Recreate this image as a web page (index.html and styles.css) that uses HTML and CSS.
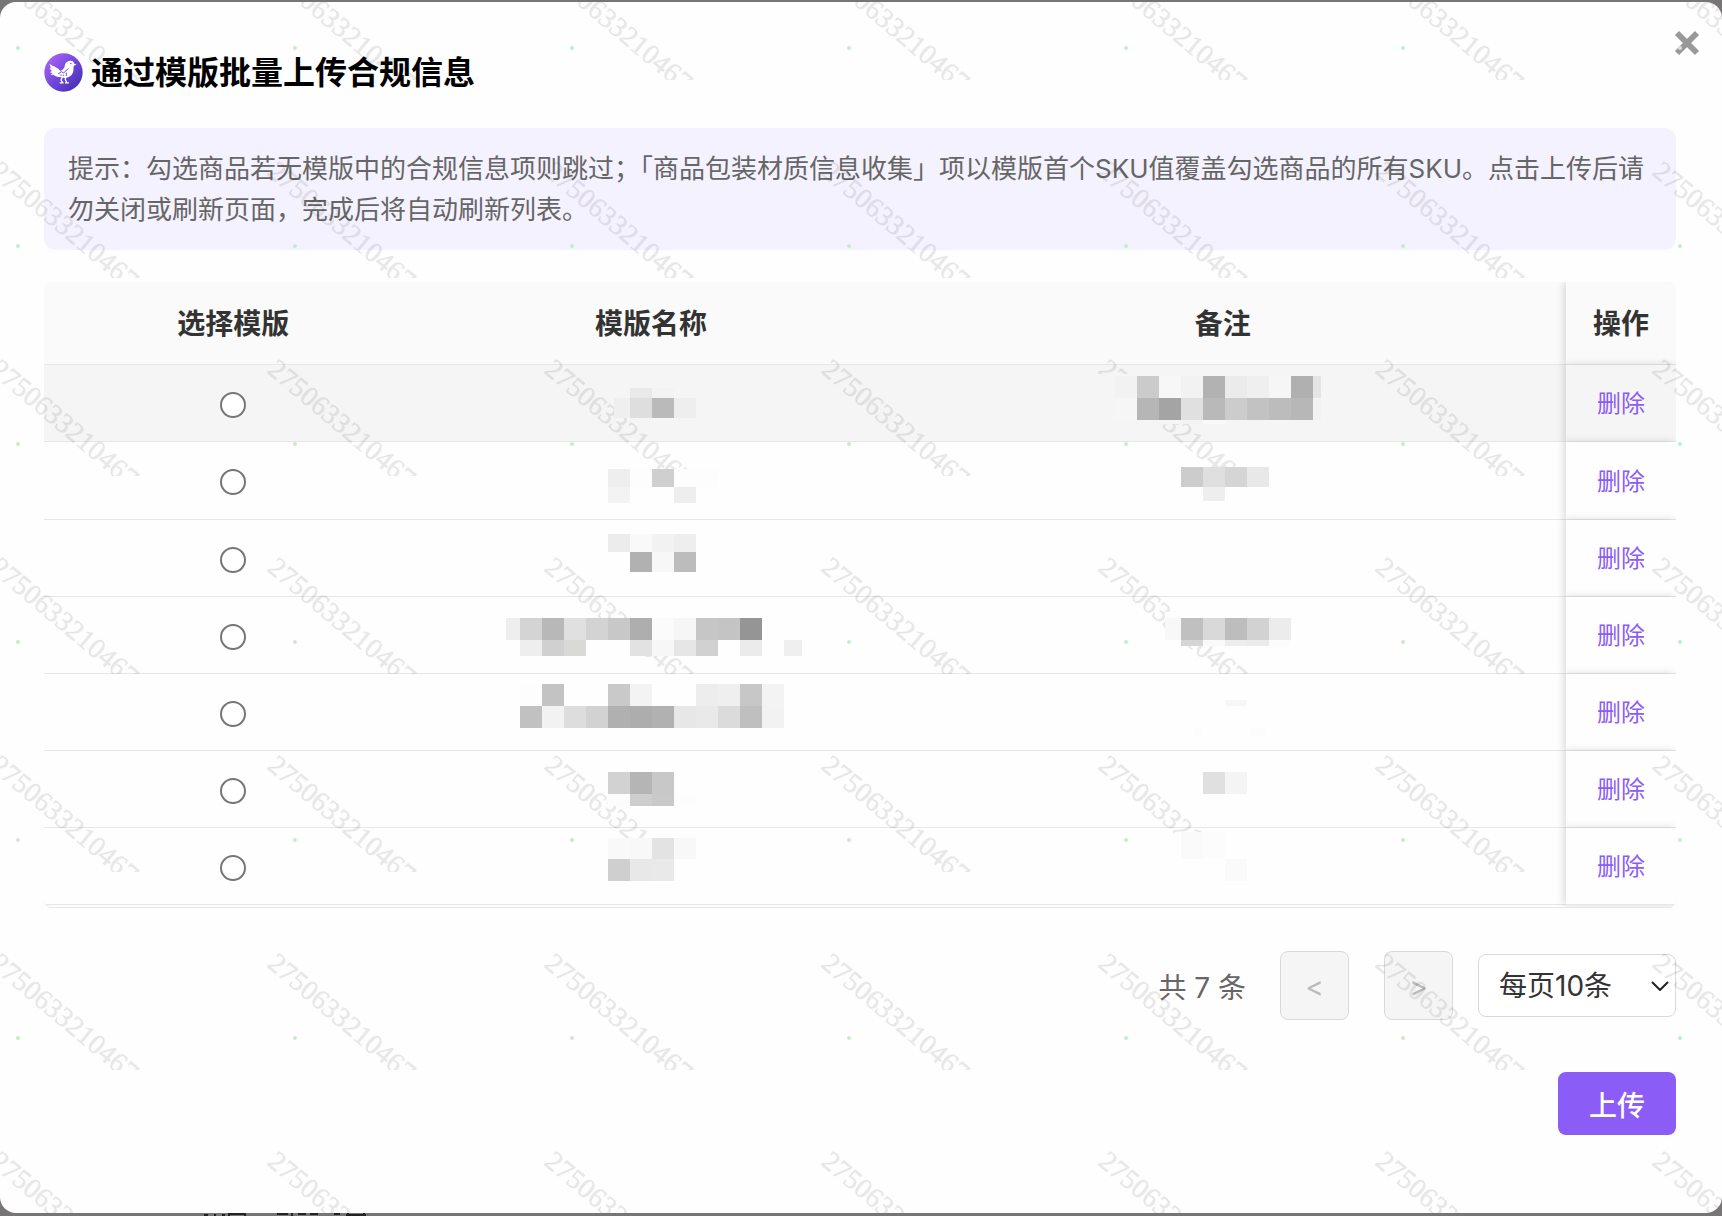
FILE: index.html
```html
<!DOCTYPE html>
<html lang="zh-CN">
<head>
    <meta charset="UTF-8">
    <meta name="viewport" content="width=device-width, initial-scale=1.0">
    <title>通过模版批量上传合规信息</title>
    <link rel="stylesheet" href="styles.css">
</head>
<body>
    <div class="modal" role="dialog" aria-labelledby="modal-title">
        <button class="close" type="button" aria-label="关闭">
            <svg viewBox="0 0 26 26" width="26" height="26"><path d="M3 3 L23 23 M23 3 L3 23" stroke="#999" stroke-width="6" fill="none"/></svg>
        </button>

        <div class="modal-header">
            <svg class="logo" viewBox="42 39 117 119" width="39" height="39" aria-hidden="true">
                <defs>
                    <linearGradient id="logo-bg" x1="0" y1="0" x2="1" y2="1">
                        <stop offset="0" stop-color="#b868fb"/>
                        <stop offset="0.5" stop-color="#7048dc"/>
                        <stop offset="1" stop-color="#3c2aa8"/>
                    </linearGradient>
                </defs>
                <circle cx="100.500" cy="98.500" r="58.500" fill="url(#logo-bg)"/>
                <path fill="#fff" d="M57 71 C66 80 80 80 88 91 L91 94 C98 90 103 86 104 80 C105 70 112 63 122 63 C129 63 132 67 133 71 L140 74 L132 78 C130 84 132 90 130 96 C127 107 118 114 106 115 L92 113 C82 112 74 109 70 105 L61 106 L67 101 L59 98 L65 94 L58 86 L62 85 Z"/>
                <circle cx="123" cy="71" r="2" fill="#5b3cc4"/>
                <path fill="none" stroke="#6646d4" stroke-width="3" d="M84 103 L94 96 L101 100 L115 86 M93 109 V104 M101 109 V105 M109 109 V99"/>
                <path fill="none" stroke="#fff" stroke-width="4" d="M97 112 L93 121 L98 130 M89 130 H101 M107 112 L106 120 L111 130 M105 130 H117"/>
            </svg>
            <h2 id="modal-title">通过模版批量上传合规信息</h2>
        </div>

        <div class="tip">提示：勾选商品若无模版中的合规信息项则跳过；「商品包装材质信息收集」项以模版首个SKU值覆盖勾选商品的所有SKU。点击上传后请勿关闭或刷新页面，完成后将自动刷新列表。</div>

        <div class="table-wrap">
            <table>
                <colgroup>
                    <col class="col-select">
                    <col class="col-name">
                    <col>
                    <col class="col-action">
                </colgroup>
                <thead>
                    <tr>
                        <th>选择模版</th>
                        <th>模版名称</th>
                        <th>备注</th>
                        <th class="fixed">操作</th>
                    </tr>
                </thead>
                <tbody id="template-rows"></tbody>
            </table>
        </div>

        <div class="pagination">
            <span class="total">共 7 条</span>
            <button class="page-btn prev" type="button" aria-label="上一页" disabled>&lt;</button>
            <button class="page-btn next" type="button" aria-label="下一页" disabled>&gt;</button>
            <div class="page-size">
                <select aria-label="每页条数">
                    <option>每页10条</option>
                    <option>每页20条</option>
                    <option>每页50条</option>
                </select>
                <svg class="arrow" viewBox="0 0 18 10" width="18" height="10" aria-hidden="true"><path d="M1 1 L9 9 L17 1" fill="none" stroke="#222" stroke-width="2"/></svg>
            </div>
        </div>

        <div class="modal-footer">
            <button class="btn" type="button">上传</button>
        </div>

        <svg class="watermark" width="100%" height="100%" aria-hidden="true">
            <defs>
                <pattern id="mark" x="-13" y="78" width="277" height="198" patternUnits="userSpaceOnUse">
                    <text class="mark-text" transform="translate(2 94) rotate(40)">2750633210467</text>
                    <circle cx="31" cy="166" r="2" fill="#c4efc4"/>
                </pattern>
            </defs>
            <rect width="100%" height="100%" fill="url(#mark)"/>
        </svg>
    </div>

    <!-- top edge of the page text below the dialog -->
    <svg class="page-behind" viewBox="0 0 170 3" width="170" height="3" aria-hidden="true">
        <path d="M2 2 H6 M12 2 H14 M20 2 H23 M27 1 H43 M43 0 V3 M27 0 V3 M75 1 H86 M90 0 V3 M96 1 H104 M108 1 H116 M132 1 H138 M144 2 H164 M146 0 V3 M162 0 V3" stroke="#222" stroke-width="2" fill="none"/>
    </svg>

    <script src="script.js"></script>
</body>
</html>
```
FILE: styles.css
```css
* {
    box-sizing: border-box;
}
body {
    margin: 0;
    padding: 2px 0 0;
    background-color: #777575;
    color: #333;
    font-family: Inter, "Noto Sans CJK SC", sans-serif;
    font-size: 28px;
    overflow: hidden;
}
button,
select {
    font-family: inherit;
    font-size: 28px;
    cursor: pointer;
}
.modal {
    position: relative;
    min-height: calc(100vh - 5px);
    padding: 51px 46px 77px 44px;
    background-color: #fefefe;
    border-radius: 16px;
    overflow: hidden;
}
.close {
    position: absolute;
    top: 28px;
    right: 22px;
    padding: 0;
    border: none;
    background: none;
}
.close svg {
    display: block;
}
.modal-header {
    display: flex;
    align-items: center;
    gap: 8px;
    height: 39px;
    margin-bottom: 36px;
}
.modal-header h2 {
    margin: 0;
    color: #000;
    font-size: 32px;
    line-height: 40px;
}
.tip {
    margin-bottom: 32px;
    padding: 20px 24px;
    border-radius: 12px;
    background-color: #f5f2ff;
    color: #666;
    font-size: 26px;
    line-height: 41px;
}

/* table */
.table-wrap {
    margin-bottom: 43px;
    padding-bottom: 2px;
    border-bottom: 1px solid #e6e8e8;
    border-radius: 8px;
    overflow: hidden;
}
table {
    width: 100%;
    table-layout: fixed;
    border-collapse: separate;
    border-spacing: 0;
}
.col-select {
    width: 23.2%;
}
.col-name {
    width: 28%;
}
.col-action {
    width: 110px;
}
th,
td {
    padding: 0;
    border-bottom: 1px solid #e6e8e8;
    text-align: center;
}
th {
    height: 83px;
    padding-bottom: 2px;
    background-color: #fafafa;
    font-weight: bold;
}
td {
    height: 77px;
    line-height: 40px;
}
tbody tr:first-child td {
    background-color: #f5f5f5;
}
tbody tr:nth-child(2) td {
    height: 78px;
}
.fixed {
    position: relative;
    background-color: #fefefe;
    box-shadow: -2px 0 8px rgba(0, 0, 0, 0.15);
}
th.fixed {
    background-color: #fafafa;
}
td input {
    appearance: none;
    display: block;
    width: 26px;
    height: 26px;
    margin: 3px auto 0;
    border: 2px solid #767676;
    border-radius: 50%;
    background-color: #fff;
}
td input:checked {
    border: 8px solid #8b5cf6;
}
td a {
    color: #8b5cf6;
    font-size: 24px;
    text-decoration: none;
}
.mosaic {
    position: relative;
    z-index: 2;
    display: block;
    margin: 0 auto;
    overflow: visible;
}

/* pagination */
.pagination {
    display: flex;
    justify-content: flex-end;
    align-items: center;
    margin-bottom: 52px;
}
.total {
    margin-right: 34px;
    color: #666;
}
.page-btn {
    width: 69px;
    height: 69px;
    padding: 2px 0 0;
    border: 1px solid #d9d9d9;
    border-radius: 8px;
    background-color: #f5f5f5;
    color: #bbb;
}
.prev {
    margin-right: 35px;
}
.next {
    margin-right: 25px;
}
.page-size {
    position: relative;
}
.page-size select {
    appearance: none;
    display: block;
    width: 198px;
    height: 63px;
    padding: 0 20px;
    border: 1px solid #d9d9d9;
    border-radius: 8px;
    background-color: #fff;
    color: #333;
}
.arrow {
    position: absolute;
    top: 27px;
    right: 7px;
    pointer-events: none;
}
.modal-footer {
    display: flex;
    justify-content: flex-end;
}
.btn {
    width: 118px;
    height: 63px;
    padding: 0;
    border: none;
    border-radius: 8px;
    background-color: #8b5cf6;
    color: #fff;
    font-weight: 500;
}

/* watermark over the dialog */
.watermark {
    position: absolute;
    top: 0;
    left: 0;
    z-index: 1;
    pointer-events: none;
}
.mark-text {
    font-family: "Liberation Serif", serif;
    font-size: 28px;
    fill: rgba(0, 0, 0, 0.08);
    stroke: rgba(0, 0, 0, 0.03);
}
.page-behind {
    display: block;
    margin-left: 202px;
}
```
FILE: script.js
```js
// Each strip: [y, height, x, colors...]. Cells are 22px wide, "-" skips a cell.
// An object is one block of its own size.
const templates = [
    {
        name: [[23, 10, 122, "e9e9e9 f3f3f3"], { x: 106, y: 33, w: 16, h: 20, c: "efefef" }, [33, 20, 122, "dedede bababa eeeeee"]],
        remark: [
            { x: 14, y: 9, w: 227, h: 50, c: "f5f5f5" },
            [11, 22, 35, "f2f2f2 cbcbcb f7f7f7 f2f2f2 b2b2b2 ebebeb efefef f6f6f6 b0b0b0"],
            { x: 233, y: 11, w: 8, h: 22, c: "e5e5e5" },
            [33, 22, 35, "f6f6f6 b6b6b6 a4a4a4 e0e0e0 b9b9b9 cccccc c2c2c2 bcbcbc b7b7b7"],
            { x: 233, y: 33, w: 8, h: 22, c: "f2f2f2" },
            [55, 4, 101, "f3f3f3 f9f9f9"]
        ]
    },
    {
        name: [[26, 18, 100, "eeeeee fdfdfd cfcfcf fdfdfd fdfdfd"], [44, 16, 100, "f3f3f3 fefefe fefefe eeeeee"]],
        remark: [{ x: 101, y: 24, w: 110, h: 36, c: "fefefe" }, [24, 20, 101, "cccccc dfdfdf d5d5d5 e8e8e8"], [44, 14, 123, "eeeeee"]]
    },
    {
        name: [[14, 18, 100, "ececec f9f9f9 f2f2f2 eeeeee"], [32, 20, 122, "b1b1b1 f7f7f7 bcbcbc"]],
        remark: []
    },
    {
        name: [
            { x: -2, y: 21, w: 14, h: 22, c: "eeeeee" },
            [21, 22, 12, "d4d4d4 b8b8b8 e0e0e0 d3d3d3 c8c8c8 aeaeae fbfbfb f6f6f6 c6c6c6 c4c4c4 959595"],
            [43, 16, 12, "eeeeee d0d0d0 d9d9d6 fefefe fefefe e2e2e2 f7f7f7 e6e6e6 d1d1d1 fefefe ebebeb"],
            { x: 276, y: 43, w: 18, h: 16, c: "efefef" }
        ],
        remark: [
            { x: 85, y: 15, w: 126, h: 34, c: "fefefe" },
            { x: 85, y: 21, w: 16, h: 22, c: "f8f8f8" },
            [21, 22, 101, "c0c0c0 d9d9d9 bdbdbd d2d2d2 ececec"],
            [43, 6, 101, "d6d6d6 fafafa ededed ebebeb fcfcfc"]
        ]
    },
    {
        name: [
            [10, 22, 12, "fdfdfd c3c3c3 - - c9c9c9 f3f3f3 - - ededed efefef c7c7c7 f3f3f3"],
            [32, 22, 12, "c1c1c1 f2f2f2 dddddd d2d2d2 b0b0b0 adadad b1b1b1 e7e7e7 e9e9e9 dbdbdb bfbfbf f2f2f2"]
        ],
        remark: [[26, 6, 145, "f7f7f7"], { x: 113, y: 54, w: 9, h: 8, c: "fcfcfc" }, { x: 169, y: 54, w: 17, h: 8, c: "fcfcfc" }]
    },
    {
        name: [[21, 22, 100, "d2d2d2 b5b5b5 c8c8c8"], [43, 12, 100, "fcfcfc cecece c9c9c9 fdfdfd"]],
        remark: [[21, 22, 123, "e0e0e0 f4f4f4"]]
    },
    {
        name: [
            { x: 100, y: 10, w: 116, h: 44, c: "fefefe" },
            [10, 21, 100, "f9f9f9 f8f8f8 e3e3e3 f8f8f8"],
            [31, 22, 100, "cfcfcf e8e8e8 e9e9e9"]
        ],
        remark: [{ x: 95, y: 4, w: 110, h: 56, c: "fefefe" }, [4, 27, 101, "fafafa fcfcfc"], [31, 22, 145, "fafafa"]]
    }
];

function block(x, y, w, h, c) {
    return `<rect x="${x}" y="${y}" width="${w}" height="${h}" fill="#${c}"/>`;
}

function mosaic(strips) {
    const rects = strips.map(s => {
        if (!Array.isArray(s)) {
            return block(s.x, s.y, s.w, s.h, s.c);
        }
        const [y, h, x, colors] = s;
        return colors.split(" ").map((c, i) => c === "-" ? "" : block(x + i * 22, y, 22, h, c)).join("");
    });
    return `<svg class="mosaic" width="286" height="76" shape-rendering="crispEdges" aria-hidden="true">${rects.join("")}</svg>`;
}

document.getElementById("template-rows").innerHTML = templates.map((t, i) => `
    <tr>
        <td><input type="radio" name="template" aria-label="选择模版 ${i + 1}"></td>
        <td>${mosaic(t.name)}</td>
        <td>${mosaic(t.remark)}</td>
        <td class="fixed"><a href="#delete">删除</a></td>
    </tr>`).join("");
```
